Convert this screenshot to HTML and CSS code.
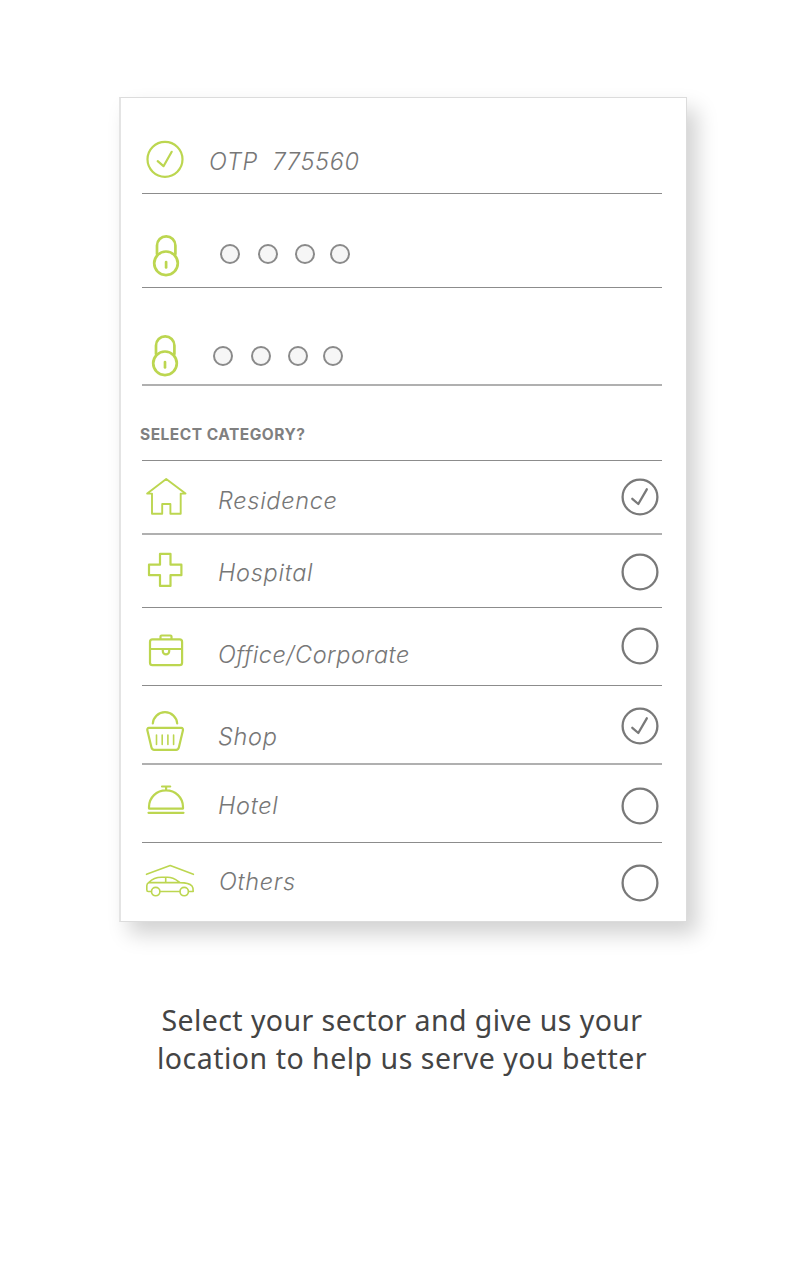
FILE: index.html
```
<!DOCTYPE html>
<html lang="en">
<head>
<meta charset="utf-8">
<title>Select category</title>
<link rel="stylesheet" href="styles.css">
</head>
<body>
<main class="page">
  <section class="card">
    <div class="row otp">
      <svg class="icon" width="60" height="95" viewBox="142 98 60 95"><circle cx="165" cy="159.3" r="17.5"/><path d="M157.7 161.2l5.800 5 8.200-14.400"/></svg>
      <span class="label">OTP&nbsp; 775560</span>
    </div>
    <div class="row pin">
      <svg class="icon lock" width="60" height="93" viewBox="142 194 60 93"><path d="M157 254v-8.500a9.200 9.200 0 0 1 18.400 0v8.500"/><circle cx="166" cy="263.300" r="11.800"/><path d="M166.100 262v5.500"/></svg>
      <span class="dots"><i class="dot"></i><i class="dot"></i><i class="dot"></i><i class="dot"></i></span>
    </div>
    <div class="row confirm heavy">
      <svg class="icon lock" width="60" height="96" viewBox="142 288 60 96"><path d="M156 354v-8.500a9.200 9.200 0 0 1 18.400 0v8.500"/><circle cx="165" cy="363.300" r="11.800"/><path d="M165 362v5.500"/></svg>
      <span class="dots"><i class="dot"></i><i class="dot"></i><i class="dot"></i><i class="dot"></i></span>
    </div>
    <h2 class="row heading"><span class="title">SELECT CATEGORY?</span></h2>
    <div class="row residence heavy">
      <svg class="icon thin" width="60" height="72" viewBox="142 461 60 72"><path d="M166.200 479l-19 14.600h4.800v20.200h10.200v-9.800h8.200v9.800h10.300v-20.200h4.800z"/></svg>
      <span class="label">Residence</span>
      <svg class="radio" width="38" height="38" viewBox="0 0 38 38"><circle cx="19" cy="19" r="17.400"/><path d="M11.300 20.800l6 5.200 8.500-14.700"/></svg>
    </div>
    <div class="row hospital">
      <svg class="icon" width="60" height="72" viewBox="142 535 60 72"><path d="M160 553.900h10.500v10.800h10.900v10.500h-10.900v10.700h-10.500v-10.700h-11v-10.500h11z"/></svg>
      <span class="label">Hospital</span>
      <svg class="radio" width="38" height="38" viewBox="0 0 38 38"><circle cx="19" cy="19" r="17.400"/></svg>
    </div>
    <div class="row office">
      <svg class="icon" width="60" height="77" viewBox="142 608 60 77"><rect x="150" y="639.400" width="32.100" height="25.800" rx="2.500"/><path d="M160.500 639v-2.500q0-1 1-1h9q1 0 1 1v2.500M150 649h32M162.800 649.500v1.700a3.200 3.200 0 0 0 6.400 0v-1.700"/></svg>
      <span class="label">Office/Corporate</span>
      <svg class="radio" width="38" height="38" viewBox="0 0 38 38"><circle cx="19" cy="19" r="17.400"/></svg>
    </div>
    <div class="row shop heavy">
      <svg class="icon" width="60" height="77" viewBox="142 686 60 77"><path d="M152.800 723.500c.4-6 5.500-11.300 12.200-11.300s11.800 5.300 12.200 11.300"/><path d="M149 727.900h32.200c1.600 0 2 1.200 1.700 2.700l-4 16.700q-.6 2.500-2.700 2.500h-22q-2.200 0-2.800-2.500l-4-16.700c-.4-1.500.1-2.700 1.600-2.700z"/><path class="fine" d="M156.500 735v9.500M162.200 735v9.500M167.900 735v9.500M173.600 735v9.500"/></svg>
      <span class="label">Shop</span>
      <svg class="radio" width="38" height="38" viewBox="0 0 38 38"><circle cx="19" cy="19" r="17.400"/><path d="M11.300 20.800l6 5.200 8.500-14.700"/></svg>
    </div>
    <div class="row hotel">
      <svg class="icon" width="60" height="77" viewBox="142 765 60 77"><path d="M162 786.500h8.200M166.100 786.500v4M149 808.600v-1.600c0-9.500 7.600-16.700 17-16.700s17 7.200 17 16.700v1.600zM148.500 812.800h35"/></svg>
      <span class="label">Hotel</span>
      <svg class="radio" width="38" height="38" viewBox="0 0 38 38"><circle cx="19" cy="19" r="17.400"/></svg>
    </div>
    <div class="row others">
      <svg class="icon car" width="60" height="78" viewBox="142 843 60 78"><path d="M146.500 874.300l23.700-8.700 23.200 8.700M151.400 891.500h-3.200q-1.400 0-1.400-1.800v-4q0-2 2-3.200c3-3 7.500-5.200 12.700-5.200h6c6 0 8.700 2.600 12.500 5.300 6 0 10 1.200 12 3.400q1.200 1.300 1.200 5.500h-4.400M160 891.500h19.800M148.800 882.600h31.200M165.700 877.500v5"/><circle cx="155.700" cy="891.600" r="4.200"/><circle cx="184.200" cy="891.600" r="4.200"/></svg>
      <span class="label">Others</span>
      <svg class="radio" width="38" height="38" viewBox="0 0 38 38"><circle cx="19" cy="19" r="17.400"/></svg>
    </div>
  </section>
  <p class="caption"><span class="line first">Select your sector and give us your</span><span class="line second">location to help us serve you better</span></p>
</main>
</body>
</html>
```
FILE: styles.css
```
* { box-sizing: border-box; }
body { margin: 0; background: #fff; }
.page {
  width: 808px;
  height: 1280px;
  padding-top: 97px;
  overflow: hidden;
}
.card {
  width: 568px;
  height: 825px;
  margin-left: 119px;
  padding: 0 24px 0 21px;
  border: 1px solid #dcdcdc;
  border-left: 2px solid #e4e4e4;
  background: #fff;
  box-shadow: 10px 12px 20px rgba(0, 0, 0, 0.18);
  font-family: Inter, Lato, sans-serif;
  color: #777;
}
.row {
  display: flex;
  align-items: flex-start;
  width: 520px;
  margin: 0;
  border-bottom: 1px solid #8c8c8c;
}
.heavy { border-bottom: 2px solid #b0b0b0; }
.icon {
  flex: none;
  display: block;
  fill: none;
  stroke: #bcd650;
  stroke-width: 2.2;
  stroke-linejoin: round;
  stroke-linecap: round;
}
.lock { stroke-width: 2.7; }
.thin { stroke-width: 1.9; }
.car { stroke-width: 1.6; }
.fine { stroke-width: 1.6; }
.label {
  margin-left: 16px;
  font-size: 23.5px;
  line-height: 30px;
  font-style: italic;
  font-weight: 350;
  letter-spacing: 0.7px;
  white-space: nowrap;
}
.radio {
  flex: none;
  margin-left: auto;
  margin-right: 3px;
  fill: none;
  stroke: #797979;
  stroke-width: 2.3;
  stroke-linecap: round;
  stroke-linejoin: round;
}
.dots { display: flex; }
.dot {
  width: 20px;
  height: 20px;
  margin-right: 17px;
  border: 2px solid #8a8a8a;
  border-radius: 50%;
  background: #f6f6f6;
}
.dot:nth-child(3) { margin-right: 15px; }
.dot:first-child { margin-right: 18px; }

.otp { height: 96px; }
.otp .label { margin: 49px 0 0 7px; }
.pin { height: 94px; }
.pin .dots { margin: 50px 0 0 18.400px; }
.confirm { height: 98px; }
.confirm .dots { margin: 58px 0 0 10.500px; }
.heading { height: 75px; }
.title {
  margin: 39px 0 0 -2px;
  font-size: 15.5px;
  line-height: 20px;
  font-weight: 700;
  letter-spacing: 0.5px;
  color: #808080;
}
.residence { height: 74px; }
.residence .label { margin-top: 25px; }
.residence .radio { margin-top: 17px; }
.hospital { height: 73px; }
.hospital .label { margin-top: 23px; }
.hospital .radio { margin-top: 18px; }
.office { height: 78px; }
.office .label { margin-top: 32px; letter-spacing: 0.5px; }
.office .radio { margin-top: 19px; }
.shop { height: 79px; }
.shop .label { margin-top: 36px; }
.shop .radio { margin-top: 21px; }
.hotel { height: 78px; }
.hotel .label { margin-top: 26px; }
.hotel .radio { margin-top: 22px; }
.others { height: 78px; border-bottom: 0; }
.others .label { margin: 24px 0 0 17px; }
.others .radio { margin-top: 21px; }

.caption {
  display: flex;
  flex-direction: column;
  align-items: center;
  margin: 79px 0 0;
  padding-right: 4px;
  font-family: "Noto Sans", "Open Sans", sans-serif;
  font-size: 28.5px;
  line-height: 38px;
  color: #444;
}
.line { white-space: nowrap; letter-spacing: 0.5px; }
.first { letter-spacing: 0.42px; }
```
